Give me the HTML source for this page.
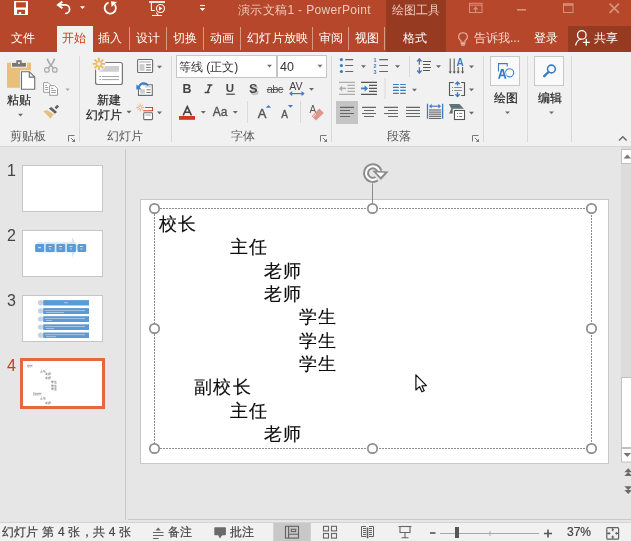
<!DOCTYPE html>
<html><head><meta charset="utf-8">
<style>
*{margin:0;padding:0;box-sizing:border-box}
html,body{width:631px;height:541px;overflow:hidden;background:#e6e6e6;font-family:"Liberation Sans",sans-serif}
.a{position:absolute}
.t{position:absolute;white-space:nowrap;line-height:1;will-change:transform}
svg{position:absolute;overflow:visible;will-change:transform}
#title{left:0;top:0;width:631px;height:52px;background:#b7472a}
.tab{position:absolute;top:32px;font-size:12px;color:#fff;line-height:1;white-space:nowrap;will-change:transform}
.tsep{position:absolute;top:27px;width:1px;height:23px;background:#d89886}
#ribbon{left:0;top:52px;width:631px;height:95px;background:#f1f1f1;border-bottom:1px solid #d6d6d6}
.gsep{position:absolute;top:56px;width:1px;height:86px;background:#d9d9d9}
.glabel{position:absolute;top:130px;font-size:12px;color:#5a5a5a;line-height:1;white-space:nowrap;will-change:transform}
.lbl{position:absolute;font-size:12px;color:#262626;line-height:1;white-space:nowrap;will-change:transform;-webkit-text-stroke:0.2px #262626}
.dd{position:absolute;width:0;height:0;border-left:3.5px solid transparent;border-right:3.5px solid transparent;border-top:4px solid #6a6a6a}
.thumb{position:absolute;left:22px;width:81px;height:47px;background:#fff;border:1px solid #c6c6c6}
.num{position:absolute;left:7px;font-size:16px;color:#444;line-height:1;will-change:transform}
.st{position:absolute;top:526px;font-size:12px;color:#444;line-height:1;white-space:nowrap;will-change:transform;-webkit-text-stroke:0.2px #444}
.sl{position:absolute;font-size:18px;letter-spacing:1.3px;margin-top:1.5px;color:#0d0d0d;-webkit-text-stroke:0.15px #0d0d0d;line-height:1;white-space:nowrap;will-change:transform}
</style></head><body>

<!-- TITLE BAR -->
<div id="title" class="a"></div>
<div class="a" style="left:386px;top:0;width:60px;height:52px;background:#963a22"></div>
<div class="a" style="left:568px;top:26px;width:63px;height:26px;background:#963a22"></div>
<div class="a" style="left:57px;top:26px;width:35.5px;height:26px;background:#f1f1f1"></div>

<div class="t" style="left:238px;top:4px;font-size:12px;color:#efcabe;letter-spacing:0.35px">演示文稿1 - PowerPoint</div>
<div class="t" style="left:392px;top:4px;font-size:12px;color:#efcabe">绘图工具</div>

<div class="tab" style="left:11px">文件</div>
<div class="tab" style="left:62px;color:#c43e1c">开始</div>
<div class="tab" style="left:98px">插入</div>
<div class="tsep" style="left:129px"></div>
<div class="tab" style="left:136px">设计</div>
<div class="tsep" style="left:166px"></div>
<div class="tab" style="left:173px">切换</div>
<div class="tsep" style="left:203px"></div>
<div class="tab" style="left:210px">动画</div>
<div class="tsep" style="left:240px"></div>
<div class="tab" style="left:247px;letter-spacing:0.3px">幻灯片放映</div>
<div class="tsep" style="left:312px"></div>
<div class="tab" style="left:319px">审阅</div>
<div class="tsep" style="left:348px"></div>
<div class="tab" style="left:355px">视图</div>
<div class="tsep" style="left:384px"></div>
<div class="tab" style="left:403px">格式</div>
<div class="tab" style="left:474px;color:#f3d6cd">告诉我...</div>
<div class="tab" style="left:534px">登录</div>
<div class="tab" style="left:594px">共享</div>

<!-- RIBBON -->
<div id="ribbon" class="a"></div>

<div class="glabel" style="left:10px">剪贴板</div>
<div class="glabel" style="left:107px">幻灯片</div>
<div class="glabel" style="left:231px">字体</div>
<div class="glabel" style="left:387px">段落</div>

<div class="gsep" style="left:79px"></div>
<div class="gsep" style="left:171px"></div>
<div class="gsep" style="left:331px"></div>
<div class="gsep" style="left:483px"></div>
<div class="gsep" style="left:527px"></div>
<div class="gsep" style="left:571px"></div>

<div class="lbl" style="left:7px;top:94px">粘贴</div>
<div class="lbl" style="left:97px;top:94px">新建</div>
<div class="lbl" style="left:86px;top:108.5px">幻灯片</div>
<div class="lbl" style="left:494px;top:92px">绘图</div>
<div class="lbl" style="left:538px;top:92px">编辑</div>

<!-- font boxes -->
<div class="a" style="left:176px;top:55px;width:101px;height:23px;background:#fff;border:1px solid #c6c6c6"></div>
<div class="a" style="left:277px;top:55px;width:50px;height:23px;background:#fff;border:1px solid #c6c6c6"></div>
<div class="t" style="left:179px;top:61px;font-size:12px;color:#333">等线 (正文)</div>
<div class="t" style="left:280px;top:61px;font-size:12.5px;color:#333">40</div>

<!-- WORKSPACE -->
<div class="a" style="left:125px;top:149px;width:1px;height:371px;background:#c8c8c8"></div>

<div class="num" style="top:163px">1</div>
<div class="thumb" style="top:165px"></div>
<div class="num" style="top:228px">2</div>
<div class="thumb" style="top:230px"></div>
<div class="num" style="top:293px">3</div>
<div class="thumb" style="top:295px"></div>
<div class="num" style="top:358px;color:#c43e1c">4</div>
<div class="a" style="left:20px;top:358px;width:85px;height:51px;background:#fff;border:3px solid #e5673f"></div>

<!-- slide -->
<div class="a" style="left:140px;top:199px;width:469px;height:265px;background:#fff;border:1px solid #c8c8c8"></div>

<div class="sl" style="left:159px;top:213px">校长</div>
<div class="sl" style="left:230px;top:236px">主任</div>
<div class="sl" style="left:264px;top:260px">老师</div>
<div class="sl" style="left:264px;top:283px">老师</div>
<div class="sl" style="left:299px;top:306px">学生</div>
<div class="sl" style="left:299px;top:330px">学生</div>
<div class="sl" style="left:299px;top:353px">学生</div>
<div class="sl" style="left:194px;top:376px">副校长</div>
<div class="sl" style="left:230px;top:400px">主任</div>
<div class="sl" style="left:264px;top:423px">老师</div>

<!-- STATUS BAR -->
<div class="a" style="left:0;top:522px;width:631px;height:19px;background:#f1f1f1;border-top:1px solid #d4d4d4"></div>
<div class="a" style="left:128px;top:519px;width:503px;height:1px;background:#c8c8c8"></div>
<div class="st" style="left:2px;letter-spacing:0.22px">幻灯片 第 4 张，共 4 张</div>
<div class="st" style="left:168px">备注</div>
<div class="st" style="left:230px">批注</div>
<div class="st" style="left:567px">37%</div>


<svg class="a" style="left:0;top:0" width="631" height="541" viewBox="0 0 631 541">
<!-- ===== title bar icons ===== -->
<path fill="#fff" fill-rule="evenodd" d="M14 1h14v14h-14z M16.1 2.2v5.4h9.8v-5.4z M17.1 9.8v4.1h1.7v-1.9h2.4v1.9h3.8v-4.1z"/>
<!-- undo -->
<path d="M58.5 4.9 H65.3 A4.3 4.3 0 0 1 65.3 13.5 H65" fill="none" stroke="#fff" stroke-width="1.7"/>
<path d="M62.4 1.6 L58 4.9 L62.4 8.2" fill="none" stroke="#fff" stroke-width="2"/>
<path d="M80 6.3h5l-2.5 2.8z" fill="#fff"/>
<!-- redo (circular) -->
<path d="M108.6 2.6 A 5.6 5.6 0 1 0 114.6 4.4" fill="none" stroke="#fff" stroke-width="1.8"/>
<path d="M111 1.2 L117 2 L111.6 7z" fill="#fff"/>
<!-- start slideshow -->
<g fill="none" stroke="#fff" stroke-width="1.1">
  <path d="M149 2h16" stroke-width="1.7"/>
  <path d="M151.4 2.5v8h3.4"/>
  <circle cx="160.5" cy="8.5" r="4"/>
  <path d="M152 15.5h10 M156.4 12.6l1.6 2.6"/>
</g>
<path d="M159 6.2v4.6l3.4-2.3z" fill="#fff"/>
<!-- qat customize -->
<path d="M200 5.5h5" stroke="#fff" stroke-width="1.1"/>
<path d="M199.8 8h5.4l-2.7 2.9z" fill="#fff"/>
<!-- window controls -->
<g fill="none" stroke="#d9917d" stroke-width="1">
  <rect x="469.5" y="3.3" width="12.5" height="9.2"/>
  <path d="M469.5 5.2h12.5 M475.6 8v4.6"/>
  <path d="M473 9.4l2.6-3.2 2.6 3.2z" fill="#d9917d" stroke="none"/>
  <path d="M517 9.8h9" stroke-width="1.6"/>
  <rect x="563.5" y="3.7" width="9.5" height="8.8"/>
  <path d="M563.5 5h9.5" stroke-width="1.6"/>
  <path d="M609.6 3.6l9.4 9.2 M619 3.6l-9.4 9.2" stroke-width="1.7"/>
</g>
<!-- lightbulb -->
<g fill="none" stroke="#e6b4a5" stroke-width="1.1">
  <path d="M461 42.2V40.6C458.9 39.3 458.3 37.6 458.8 35.6C459.3 33.6 461 32.8 463 32.8S466.7 33.6 467.2 35.6C467.7 37.6 467.1 39.3 465 40.6V42.2z"/>
  <path d="M460.6 43.6h4.8 M461.2 45.1h3.6"/>
</g>
<!-- person icon -->
<g fill="none" stroke="#fff" stroke-width="1.3">
  <circle cx="581.8" cy="34.9" r="4.3"/>
  <path d="M575.6 45.4 c0.6-3.4,2.6-5.6,5.4-6.4"/>
  <path d="M586.3 38.8v7 M582.8 42.3h7"/>
</g>
</svg>


<svg class="a" style="left:0;top:0" width="631" height="541" viewBox="0 0 631 541">
<!-- ===== clipboard group ===== -->
<rect x="7" y="62.7" width="24" height="25.1" fill="#e9c07a"/>
<path d="M11 62.7h16v5h-16z" fill="#f1f1f1"/>
<path d="M12 63h14v3.7h-14z" fill="#777"/>
<path d="M16.3 60.2h5.4v3.5h-5.4z" fill="#777"/>
<circle cx="19" cy="63" r="1.1" fill="#f1f1f1"/>
<path d="M20 70.2h10l6.2 6.2v14.3h-16.2z" fill="#f1f1f1"/>
<path d="M21.5 71.7h7.8l5.4 5.4v12.1h-13.2z" fill="#fff" stroke="#6e6e6e" stroke-width="1.1"/>
<path d="M29.3 71.7v5.4h5.4" fill="none" stroke="#6e6e6e" stroke-width="1.1"/>
<!-- scissors -->
<g fill="none" stroke="#a9a9a9" stroke-width="1.2">
  <path d="M47.2 58.6 Q48.4 63 53.2 67.8 M54.6 58.6 Q53.4 63 48.6 67.8" stroke-width="1.6"/>
  <circle cx="46.9" cy="69.9" r="2.3"/>
  <circle cx="54.8" cy="69.9" r="2.3"/>
</g>
<!-- copy -->
<g fill="#fff" stroke="#9c9c9c" stroke-width="1">
  <path d="M43.6 82.6h4.6l2.2 2.2v7.5h-6.8z"/>
  <path d="M49.6 85.7h5l2.9 2.9v6.7h-7.9z"/>
</g>
<path d="M45.2 85.4h2 M45.2 87.5h3 M45.2 89.5h3 M51.2 88.4h2.2 M51.2 90.4h4.8 M51.2 92.4h4.8" stroke="#9c9c9c" stroke-width="1"/>
<path d="M65.5 88.6h4.2l-2.1 2.4z" fill="#a6a6a6"/>
<!-- format painter -->
<path d="M43.3 111.2 L46.9 110 L53.8 114.2 L50.6 118.8 z" fill="#e9c07a"/>
<path d="M48.8 108.6 L51.4 106.9 L57 112 L55 113.8 z" fill="#616161"/>
<path d="M54.5 107.6 L57.1 104.8 L59.1 106.6 L56.4 109.2 z" fill="#616161"/>
<path d="M18 113.8h5l-2.5 2.8z" fill="#6a6a6a"/>
<!-- launcher icons -->
<g fill="none" stroke="#777" stroke-width="1">
  <path d="M68.5 141.5v-6h6"/>
  <path d="M71 138l3.5 3.5"/>
</g>
<path d="M75 142h-3.2l3.2-3.2z" fill="#777"/>

<!-- ===== slides group ===== -->
<rect x="95.6" y="62.5" width="26.8" height="22" rx="2" fill="#fff" stroke="#777" stroke-width="1.2"/>
<rect x="99.2" y="66" width="19.8" height="5.7" fill="#cfcfcf"/>
<path d="M99.2 76.5h1.8 M102 76.5h17 M99.2 79.6h1.8 M102 79.6h17" stroke="#a6a6a6" stroke-width="1"/>
<circle cx="98.9" cy="63.9" r="6.8" fill="#f1f1f1"/>
<g stroke="#ebb95c" stroke-width="1.9" stroke-linecap="butt">
  <path d="M98.9 57.8v3.8 M98.9 66.2v3.8 M92.8 63.9h3.8 M101.2 63.9h3.8 M94.6 59.6l2.6 2.6 M100.6 65.6l2.6 2.6 M103.2 59.6l-2.6 2.6 M97.2 65.6l-2.6 2.6"/>
</g>
<circle cx="98.9" cy="63.9" r="2.4" fill="none" stroke="#ebb95c" stroke-width="1"/>
<path d="M126.5 110.8h5l-2.5 2.8z" fill="#6a6a6a"/>
<!-- layout -->
<rect x="137.6" y="59.5" width="15" height="13" rx="1" fill="#fff" stroke="#6b6b6b" stroke-width="1.1"/>
<rect x="139.4" y="61" width="11.4" height="1.8" fill="#cdcdcd"/>
<rect x="139.4" y="64.2" width="5.2" height="6.6" fill="#cdcdcd"/>
<path d="M146 64.8h4.8 M146 67.4h4.8 M146 70h4.8" stroke="#777" stroke-width="1"/>
<path d="M157 65.8h5l-2.5 2.6z" fill="#6a6a6a"/>
<!-- reset -->
<path d="M143 84.8h9.3v10.6h-13.8v-5.8" fill="#fff" stroke="#6b6b6b" stroke-width="1.1"/>
<rect x="140.2" y="89.3" width="4.7" height="4.3" fill="#cdcdcd"/>
<path d="M146.4 89.8h4.3 M146.4 92.5h4.3" stroke="#777" stroke-width="1"/>
<path d="M145 86.8h6" stroke="#cdcdcd" stroke-width="1.4"/>
<path d="M138.6 87.6 C 140.2 82.6, 145.6 81.6, 148.2 85.6" fill="none" stroke="#3d7cc3" stroke-width="1.9"/>
<path d="M136.4 84.2 v5.4 h5.2z" fill="#3d7cc3"/>
<!-- section -->
<g stroke="#eab85a" stroke-width="1">
  <path d="M140.2 103.6v2 M140.2 109.6v2 M136.2 107.6h2 M142.2 107.6h2 M137.4 104.8l1.4 1.4 M141.6 109l1.4 1.4 M143 104.8l-1.4 1.4 M138.8 109l-1.4 1.4"/>
</g>
<circle cx="140.2" cy="107.6" r="1.5" fill="none" stroke="#eab85a" stroke-width="0.9"/>
<path d="M145.2 107.5h7.3v3.2h-9.2" fill="#fff" stroke="#d24726" stroke-width="1.1"/>
<rect x="143.7" y="112.8" width="8.8" height="6.8" rx="0.8" fill="#fff" stroke="#6b6b6b" stroke-width="1.1"/>
<rect x="145.4" y="114.2" width="5.4" height="1.8" fill="#cdcdcd"/>
<path d="M157 111.6h5l-2.5 2.6z" fill="#6a6a6a"/>

<!-- ===== font group ===== -->
<path d="M267 64.8h5l-2.5 2.8z M317.5 64.8h5l-2.5 2.8z" fill="#6a6a6a"/>
<text x="182.4" y="93" font-family="Liberation Sans" font-weight="bold" font-size="12.4" fill="#444">B</text>
<path d="M207.4 84.9h5 M204.6 92.6h5 M210.4 84.9l-3 7.7" fill="none" stroke="#444" stroke-width="1.5"/>
<text x="225.8" y="92" font-family="Liberation Sans" font-weight="bold" font-size="11.5" fill="#444">U</text>
<rect x="226.2" y="93.6" width="8.6" height="1.2" fill="#444"/>
<text x="250.5" y="94.5" font-family="Liberation Sans" font-weight="bold" font-size="12.8" fill="#999" opacity="0.6">S</text>
<text x="249" y="93.4" font-family="Liberation Sans" font-weight="bold" font-size="12.8" fill="#444">S</text>
<text x="266.8" y="92.6" font-family="Liberation Sans" font-size="11" fill="#555" textLength="16.4">abc</text>
<rect x="266.8" y="89" width="16.6" height="1" fill="#555"/>
<text x="289.2" y="89.8" font-family="Liberation Sans" font-size="10.6" fill="#444">AV</text>
<path d="M290.5 93.6h13" stroke="#3d7cc3" stroke-width="1.2"/>
<path d="M289.2 93.6l3-2.6v5.2z M304.6 93.6l-3-2.6v5.2z" fill="#3d7cc3"/>
<path d="M309 88h5l-2.5 2.8z" fill="#6a6a6a"/>
<rect x="247" y="101" width="1" height="22" fill="#d9d9d9"/>
<rect x="300" y="101" width="1" height="22" fill="#d9d9d9"/>
<path d="M183.2 115.4L187.3 106.6L191.4 115.4 M184.8 112.2h5" fill="none" stroke="#444" stroke-width="1.6"/>
<rect x="179" y="116" width="16" height="3.8" fill="#cc3a20"/>
<path d="M200.8 111h5l-2.5 2.8z" fill="#6a6a6a"/>
<text x="212.8" y="115.6" font-family="Liberation Sans" font-size="12" fill="#555" stroke="#555" stroke-width="0.35">Aa</text>
<path d="M232.8 111h5l-2.5 2.8z" fill="#6a6a6a"/>
<text x="257.8" y="117.8" font-family="Liberation Sans" font-size="13" fill="#555" stroke="#555" stroke-width="0.4">A</text>
<path d="M265.8 107.8l2.6-2.8 2.6 2.8z" fill="#3d7cc3"/>
<text x="281.2" y="117.8" font-family="Liberation Sans" font-size="10" fill="#555" stroke="#555" stroke-width="0.35">A</text>
<path d="M287.9 105l2.6 2.8 2.6-2.8z" fill="#3d7cc3"/>
<text x="309.4" y="112.6" font-family="Liberation Sans" font-size="10" fill="#555">A</text>
<path d="M311.6 116.2 L319.4 108.6 L323.8 113 L316 120.6z" fill="#e1968b"/>
<path d="M312.6 117.2 L316 113.8" stroke="#f1f1f1" stroke-width="1"/>
<g fill="none" stroke="#777" stroke-width="1">
  <path d="M320.5 141.5v-6h6"/>
  <path d="M323 138l3.5 3.5"/>
</g>
<path d="M327 142h-3.2l3.2-3.2z" fill="#777"/>

<!-- ===== paragraph group ===== -->
<g fill="#3d7cc3">
  <circle cx="341.4" cy="59.6" r="1.6"/><circle cx="341.4" cy="65.5" r="1.6"/><circle cx="341.4" cy="71.5" r="1.6"/>
</g>
<path d="M345.2 59.6h8 M345.2 65.5h8 M345.2 71.5h8" stroke="#666" stroke-width="1.2"/>
<path d="M361 65.3h5l-2.5 2.6z" fill="#6a6a6a"/>
<text x="373.6" y="62.4" font-family="Liberation Sans" font-weight="bold" font-size="5.4" fill="#3d7cc3">1</text>
<text x="373.6" y="68.3" font-family="Liberation Sans" font-weight="bold" font-size="5.4" fill="#3d7cc3">2</text>
<text x="373.6" y="74.2" font-family="Liberation Sans" font-weight="bold" font-size="5.4" fill="#3d7cc3">3</text>
<path d="M379.2 59.6h8.8 M379.2 65.5h8.8 M379.2 71.5h8.8" stroke="#666" stroke-width="1.2"/>
<path d="M395 65.3h5l-2.5 2.6z" fill="#6a6a6a"/>
<rect x="409" y="56" width="1" height="21" fill="#d9d9d9"/>
<!-- decrease indent -->
<path d="M339 82.4h16 M347.4 85.4h7.6 M347.4 88.4h7.6 M347.4 91.4h7.6 M339 94.4h16" stroke="#adadad" stroke-width="1.1"/>
<path d="M340 88.4h6" stroke="#adadad" stroke-width="1.6"/>
<path d="M339 88.4l3.2-3v6z" fill="#adadad"/>
<!-- increase indent -->
<path d="M361 82.4h16 M369 85.4h8 M369 88.4h8 M369 91.4h8 M361 94.4h16" stroke="#555" stroke-width="1.1"/>
<path d="M361 88.4h5" stroke="#3d7cc3" stroke-width="1.8"/>
<path d="M368 88.4l-3.4-3.2v6.4z" fill="#3d7cc3"/>
<rect x="384.5" y="78" width="1" height="21" fill="#d9d9d9"/>
<!-- columns -->
<path d="M393 84.5h5.8 M400.2 84.5h5.6 M393 87.4h5.8 M400.2 87.4h5.6 M393 90.3h5.8 M400.2 90.3h5.6 M393 93.3h5.8 M400.2 93.3h5.6" stroke="#3d7cc3" stroke-width="1.2"/>
<path d="M412 88.8h5l-2.5 2.6z" fill="#6a6a6a"/>
<!-- line spacing -->
<path d="M419.4 58.6v6.2 M419.4 67.2v6" stroke="#3d7cc3" stroke-width="1.3"/>
<path d="M417.2 61.4l2.2-2.4 2.2 2.4 M417.2 70.6l2.2 2.4 2.2-2.4" fill="none" stroke="#3d7cc3" stroke-width="1.5"/>
<path d="M423 61.5h8 M423 64.5h7 M423 67.5h8 M423 70.5h7" stroke="#555" stroke-width="1"/>
<path d="M436 65.3h5l-2.5 2.6z" fill="#6a6a6a"/>
<!-- text direction -->
<path d="M450.2 58.5v13.5 M454.2 58.5v13.5 M458.2 67v5 M462.6 67v5" stroke="#555" stroke-width="1"/>
<path d="M448.6 71.6h3.2l-1.6 2.2z M452.6 71.6h3.2l-1.6 2.2z M456.6 71.6h3.2l-1.6 2.2z M461 71.6h3.2l-1.6 2.2z" fill="#555"/>
<text x="456.6" y="65.8" font-family="Liberation Sans" font-weight="bold" font-size="10" fill="#3d7cc3">A</text>
<path d="M469 65.6h5l-2.5 2.6z" fill="#6a6a6a"/>
<!-- align text -->
<path d="M453.8 82.5h-4.3v13h4.3 M461.2 82.5h3.3v13h-3.3" fill="none" stroke="#555" stroke-width="1.1"/>
<path d="M452 87.5h1 M454.2 87.5h7.6 M452 90.5h1 M454.2 90.5h7.6" stroke="#888" stroke-width="1"/>
<path d="M457.5 82v3.6 M457.5 92.2v4" stroke="#3d7cc3" stroke-width="1.3"/>
<path d="M455.4 84.2l2.1-2.2 2.1 2.2 M455.4 94.2l2.1 2.2 2.1-2.2" fill="none" stroke="#3d7cc3" stroke-width="1.5"/>
<path d="M469 88.6h5l-2.5 2.6z" fill="#6a6a6a"/>
<!-- alignment -->
<rect x="336" y="101" width="22" height="23" fill="#c5c5c5"/>
<path d="M340 107.4h14 M340 110.5h10 M340 113.5h14 M340 116.5h10" stroke="#666" stroke-width="1.2"/>
<path d="M362 107.4h14 M364 110.5h10 M362 113.5h14 M364 116.5h10" stroke="#666" stroke-width="1.2"/>
<path d="M384 107.4h14 M388 110.5h10 M384 113.5h14 M388 116.5h10" stroke="#666" stroke-width="1.2"/>
<path d="M406 107.4h14 M406 110.5h14 M406 113.5h14 M406 116.5h14" stroke="#666" stroke-width="1.2"/>
<!-- distributed -->
<path d="M427.5 103.8v15 M442.6 103.8v15" stroke="#3d7cc3" stroke-width="1.3"/>
<path d="M431 106.2h8" stroke="#3d7cc3" stroke-width="1.2"/>
<path d="M429 106.2l2.6-2.4v4.8z M441 106.2l-2.6-2.4v4.8z" fill="#3d7cc3"/>
<path d="M429 110h12.2 M429 112.1h12.2 M429 114.2h12.2 M429 116.3h12.2 M429 118.4h12.2" stroke="#555" stroke-width="1"/>
<!-- smartart -->
<path d="M449 103.9H459.4L463.9 108.7H452.7V113.6H449L451.3 108.7z" fill="#5d7374"/>
<rect x="454.5" y="110.5" width="10" height="9" fill="#fff" stroke="#f1f1f1" stroke-width="3"/>
<rect x="454.5" y="110.5" width="10" height="9" fill="#fff" stroke="#555" stroke-width="1.1"/>
<path d="M457 113.4h1.2 M459.2 113.4h3 M457 116.5h1.2 M459.2 116.5h3" stroke="#777" stroke-width="1"/>
<path d="M469 111.8h5l-2.5 2.6z" fill="#6a6a6a"/>
<g fill="none" stroke="#777" stroke-width="1">
  <path d="M472.5 141.5v-6h6"/>
  <path d="M475 138l3.5 3.5"/>
</g>
<path d="M479 142h-3.2l3.2-3.2z" fill="#777"/>

<!-- ===== drawing / editing ===== -->
<rect x="490.5" y="56.5" width="29" height="29" fill="#fafafa" stroke="#c8c8c8" stroke-width="1"/>
<path d="M498.5 71.6V63.6h8.7v3" fill="none" stroke="#3d7cc3" stroke-width="1.1"/>
<circle cx="509.6" cy="72.8" r="4.1" fill="none" stroke="#3d7cc3" stroke-width="1.1"/>
<path fill="#fafafa" stroke="#fafafa" stroke-width="1.6" d="M498 78.7L501 69.1h2.6l2.9 9.6h-1.9l-0.7-2.4h-3.3l-0.7 2.4z"/>
<path fill="#3d7cc3" fill-rule="evenodd" d="M498 78.7L501 69.1h2.6l2.9 9.6h-1.9l-0.7-2.4h-3.3l-0.7 2.4z M501.1 74.6h2.3l-1.15-3.7z"/>
<path d="M505 111.4h5l-2.5 2.6z" fill="#6a6a6a"/>
<rect x="534.5" y="56.5" width="29" height="29" fill="#fafafa" stroke="#c8c8c8" stroke-width="1"/>
<circle cx="551.4" cy="69" r="3.9" fill="none" stroke="#3d7cc3" stroke-width="1.6"/>
<path d="M548.6 72 L544.2 76.2" stroke="#3d7cc3" stroke-width="2.4" stroke-linecap="round"/>
<path d="M549 111.4h5l-2.5 2.6z" fill="#6a6a6a"/>
<path d="M619 140.5l3.8-3.8 3.8 3.8" fill="none" stroke="#666" stroke-width="1.4"/>
</svg>


<svg class="a" style="left:0;top:0" width="631" height="541" viewBox="0 0 631 541">
<!-- thumb 2 content -->
<path d="M37.4 242.2h34.6v-5.2l6.5 10.3-6.5 10.3v-5.1h-34.6z" fill="#d9e6f2"/>
<g fill="#5b9bd5">
  <rect x="35.1" y="243.9" width="9" height="8.1" rx="1"/>
  <rect x="45.7" y="243.9" width="9" height="8.1" rx="1"/>
  <rect x="56.4" y="243.9" width="8.8" height="8.1" rx="1"/>
  <rect x="66.9" y="243.9" width="9" height="8.1" rx="1"/>
  <rect x="77.5" y="243.9" width="8.7" height="8.1" rx="1"/>
</g>
<g fill="#cfe0f0">
  <rect x="38" y="247" width="3" height="1.2"/>
  <rect x="48.5" y="246" width="3" height="1"/><rect x="49" y="248.5" width="2" height="1"/>
  <rect x="59" y="246" width="3" height="1"/><rect x="59.5" y="248.5" width="2" height="1"/>
  <rect x="69.5" y="246" width="3" height="1"/><rect x="70" y="248.5" width="2" height="1"/>
  <rect x="80" y="246" width="3" height="1"/><rect x="80.5" y="248.5" width="2" height="1"/>
</g>
<!-- thumb 3 content -->
<g fill="#c9d3dd">
  <circle cx="40.6" cy="302.8" r="2.7"/><circle cx="40.6" cy="311" r="2.7"/><circle cx="40.6" cy="319.1" r="2.7"/><circle cx="40.6" cy="327.1" r="2.7"/><circle cx="40.6" cy="335.2" r="2.7"/>
</g>
<g fill="#5b9bd5">
  <rect x="43.2" y="300.1" width="45.8" height="5.4"/>
  <rect x="43.2" y="308.1" width="45.8" height="5.9"/>
  <rect x="43.2" y="316.2" width="45.8" height="5.8"/>
  <rect x="43.2" y="324.3" width="45.8" height="5.7"/>
  <rect x="43.2" y="332.5" width="45.8" height="5.5"/>
</g>
<g fill="#a9c8e8">
  <rect x="64" y="302.2" width="4" height="1"/>
  <rect x="45" y="310" width="40" height="0.9"/><rect x="46" y="312" width="18" height="0.9"/>
  <rect x="45" y="318" width="40" height="0.9"/><rect x="46" y="320" width="6" height="0.9"/>
  <rect x="45" y="326" width="40" height="0.9"/><rect x="46" y="328" width="8" height="0.9"/>
  <rect x="45" y="334.2" width="40" height="0.9"/><rect x="46" y="336.2" width="10" height="0.9"/>
</g>
<!-- thumb 4 content -->
<g font-family="Liberation Sans" font-size="3.2" fill="#555">
  <text x="27" y="367.4">校长</text>
  <text x="39.5" y="371.6">主任</text>
  <text x="45.3" y="375.4">老师</text>
  <text x="45.3" y="378.6">老师</text>
  <text x="51" y="383.3">学生</text>
  <text x="51" y="386.6">学生</text>
  <text x="51" y="389.8">学生</text>
  <text x="33" y="395.2">副校长</text>
  <text x="39.5" y="399.4">主任</text>
  <text x="45.3" y="403.6">老师</text>
</g>
<!-- ===== slide selection ===== -->
<rect x="154.5" y="208.5" width="437" height="240" fill="none" stroke="#8c8c8c" stroke-width="1" stroke-dasharray="2 1" stroke-dashoffset="0.5" shape-rendering="crispEdges"/>
<path d="M372.5 183.3v20.5" stroke="#8c8c8c" stroke-width="1"/>
<g fill="#fff" stroke="#8c8c8c" stroke-width="1.7">
  <circle cx="154.5" cy="208.5" r="4.7"/>
  <circle cx="372.5" cy="208.5" r="4.7"/>
  <circle cx="591.5" cy="208.5" r="4.7"/>
  <circle cx="154.5" cy="328.5" r="4.7"/>
  <circle cx="591.5" cy="328.5" r="4.7"/>
  <circle cx="154.5" cy="448.5" r="4.7"/>
  <circle cx="372.5" cy="448.5" r="4.7"/>
  <circle cx="591.5" cy="448.5" r="4.7"/>
</g>
<!-- rotation handle -->
<path d="M379.4 171.3 A6.8 6.8 0 1 0 376.7 178.7" fill="none" stroke="#8c8c8c" stroke-width="6"/>
<path d="M379.4 171.3 A6.8 6.8 0 1 0 376.7 178.7" fill="none" stroke="#fff" stroke-width="2.1"/>
<path d="M372.3 170.6 L388.6 171.4 L380.9 180z" fill="#8c8c8c"/>
<path d="M376.2 172.5 L384.6 172.8 L380.8 177z" fill="#fff"/>
<!-- cursor -->
<path d="M415.9 374.8 V390 L419.5 386.6 L421.9 391.8 L424.2 390.8 L421.9 385.8 L426.4 385.6 z" fill="#fff" stroke="#111" stroke-width="1.2" stroke-linejoin="round"/>

<!-- ===== scrollbar ===== -->
<rect x="621" y="147" width="10" height="315" fill="#dcdcdc"/>
<rect x="621.5" y="149.5" width="10" height="14" fill="#fff" stroke="#c0c0c0" stroke-width="1"/>
<path d="M623.5 158.6 l3.8-4 3.8 4z" fill="#777"/>
<rect x="621.5" y="377.5" width="10" height="70" fill="#fff" stroke="#c0c0c0" stroke-width="1"/>
<rect x="621.5" y="448.5" width="10" height="13.5" fill="#fff" stroke="#c0c0c0" stroke-width="1"/>
<path d="M623.5 453 l3.8 4 3.8-4z" fill="#777"/>
<rect x="609" y="147" width="12" height="372" fill="#e6e6e6"/>
<path d="M624.4 472.2 l3.8-4 3.8 4z M624.4 476 l3.8-4 3.8 4z" fill="#6a6a6a"/>
<path d="M624.4 486.2 l3.8 4 3.8-4z M624.4 490 l3.8 4 3.8-4z" fill="#6a6a6a"/>

<!-- ===== status bar icons ===== -->
<path d="M155.6 530.4 l2.6-2.8 2.6 2.8z" fill="#666"/>
<path d="M153 532.5h10.6 M153 535.5h10.6 M153 538.5h5.6" stroke="#666" stroke-width="1"/>
<rect x="214.3" y="527.3" width="11.6" height="8" rx="0.8" fill="#6a6a6a"/>
<path d="M218.2 535h4.2l-2.6 3.6z" fill="#6a6a6a"/>
<rect x="273.3" y="523" width="37.5" height="18" fill="#c8c8c8"/>
<g fill="none" stroke="#616161" stroke-width="1.1">
  <rect x="285.5" y="526.3" width="13" height="11.8"/>
  <path d="M288.6 526.3v11.8 M288.6 534.2h9.9"/>
  <rect x="291.3" y="529.3" width="4.4" height="2.3"/>
</g>
<g fill="none" stroke="#666" stroke-width="1.1">
  <rect x="323.5" y="526.3" width="5" height="4.6"/>
  <rect x="331.5" y="526.3" width="5" height="4.6"/>
  <rect x="323.5" y="533.5" width="5" height="4.6"/>
  <rect x="331.5" y="533.5" width="5" height="4.6"/>
</g>
<g fill="none" stroke="#616161" stroke-width="1">
  <path d="M366 526.5 h-4.5 v10 h4.5 M369 526.5 h4.5 v10 h-4.5"/>
  <path d="M363 528.5h3 M363 530.5h3 M363 532.5h3 M363 534.5h3 M369 528.5h3 M369 530.5h3 M369 532.5h3 M369 534.5h3"/>
  <path d="M367.5 527.5v10" stroke-width="1.6"/>
</g>
<path d="M366.4 537 h2.2 l-1.1 1.8z" fill="#616161"/>
<g fill="none" stroke="#666" stroke-width="1.1">
  <path d="M398.5 526.5h13"/>
  <path d="M400 527v5.5h10v-5.5"/>
  <path d="M405 532.5v5 M401.5 537.8h7"/>
</g>
<path d="M430 533h5.5" stroke="#555" stroke-width="1.6"/>
<path d="M440 533.5h99" stroke="#a8a8a8" stroke-width="1"/>
<path d="M490 531v5" stroke="#a8a8a8" stroke-width="1"/>
<rect x="455" y="527" width="4" height="11" fill="#555"/>
<path d="M544 533.5h8 M548 529.5v8" stroke="#555" stroke-width="1.6"/>
<rect x="606.8" y="527.6" width="11.8" height="11.6" rx="1" fill="none" stroke="#616161" stroke-width="1.2"/>
<g stroke="#616161" stroke-width="1.1">
  <path d="M612.7 528v3.2 M612.7 535.4v3.4 M607 533.4h3.4 M615.2 533.4h3.4"/>
</g>
<path d="M611 530.2h3.4l-1.7-1.8z M611 536.6h3.4l-1.7 1.8z M609.4 531.7v3.4l-1.8-1.7z M616 531.7v3.4l1.8-1.7z" fill="#616161"/>
</svg>

</body></html>
